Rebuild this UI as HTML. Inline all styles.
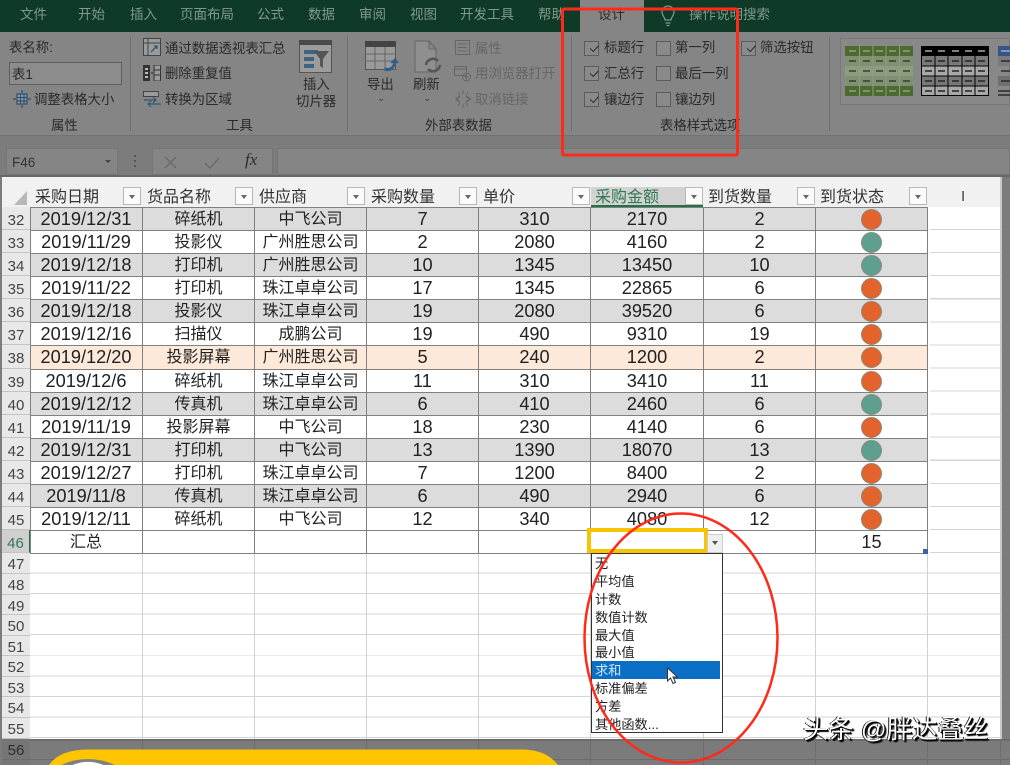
<!DOCTYPE html>
<html lang="zh"><head><meta charset="utf-8"><title>Excel</title>
<style>
html,body{margin:0;padding:0;background:#7b7b7b;overflow:hidden}
#p{position:relative;width:1010px;height:765px;overflow:hidden;background:#7c7c7c;font-family:"Liberation Sans","Noto Sans CJK SC",sans-serif;color:#262626;filter:blur(.35px)}
#p div,#p span{box-sizing:border-box}
.a{position:absolute;white-space:nowrap}
.t{position:absolute;top:6px;font-size:13.5px;line-height:18px;color:#7f9a8c;white-space:nowrap}
.m{position:absolute;font-size:13.4px;line-height:18px;white-space:nowrap;color:#2a2a2a;margin-top:1px}
.d{color:#666}
.sep{position:absolute;top:37px;width:1px;height:94px;background:#6e6e6e}
.cb{position:absolute;width:15px;height:15px;border:1px solid #5c5c5c;background:#8a8a8a}
.cb.on:after{content:"";position:absolute;left:3px;top:1px;width:7px;height:4px;border-left:1px solid #2a2a2a;border-bottom:1px solid #2a2a2a;transform:rotate(-48deg) translate(0,3px)}
.r{position:absolute;left:30px;width:898px;height:24px;display:flex;border-top:1px solid #808080;border-bottom:1px solid #808080;border-left:1px solid #808080;font-size:18.2px;line-height:22px;color:#222;background:#fff}
.r span{display:block;width:112px;flex:none;text-align:center;border-right:1px solid #808080;white-space:nowrap}
.r span:first-child{padding-right:1px}
.r span:nth-child(6){width:113px}
.r span:nth-child(2),.r span:nth-child(3){font-size:16px;padding-top:1px}
.g{background:#dcdcdc}.pc{background:#fde9d9}
.r i{display:block;width:19px;height:19px;border-radius:50%;margin:1px auto 0;border:1px solid #8a8a7a}
.o{background:#e4622c}.e{background:#5f9f90}
.n{position:absolute;left:2px;width:28px;background:#e8e8e8;font-size:15px;line-height:20px;text-align:center;color:#444;border-bottom:1px solid #c4c4c4}
.h{position:absolute;top:188px;font-size:16px;line-height:20px;color:#333;white-space:nowrap}
.f{position:absolute;top:187px;width:18px;height:18px;background:#fbfbfb;border:1px solid #b8b8b8}
.f:after{content:"";position:absolute;left:5px;top:7px;border-left:3px solid transparent;border-right:3px solid transparent;border-top:4px solid #666}
.dd{position:absolute;left:595px;font-size:13.2px;line-height:18px;color:#222;white-space:nowrap}
</style></head><body><div id="p">

<div class="a" style="left:0;top:0;width:1010px;height:32px;background:#0e3a27"></div>
<div class="a" style="left:0;top:32px;width:1010px;height:103px;background:#858585"></div>
<div class="a" style="left:0;top:135px;width:1010px;height:1px;background:#727272"></div>
<div class="a" style="left:580px;top:0;width:64px;height:33px;background:#858585"></div>

<span class="t" style="left:20px">文件</span><span class="t" style="left:78px">开始</span><span class="t" style="left:130px">插入</span><span class="t" style="left:180px">页面布局</span><span class="t" style="left:257px">公式</span><span class="t" style="left:308px">数据</span><span class="t" style="left:359px">审阅</span><span class="t" style="left:410px">视图</span><span class="t" style="left:460px">开发工具</span><span class="t" style="left:538px">帮助</span><span class="t" style="left:598px;color:#2e2e2e">设计</span><span class="t" style="left:689px">操作说明搜索</span>
<svg class="a" style="left:660px;top:5px" width="16" height="22" viewBox="0 0 16 22" fill="none" stroke="#7f9a8c" stroke-width="1.2"><path d="M5 15c0-3-3-4-3-8a6 6 0 0 1 12 0c0 4-3 5-3 8zM5.500 18h5M6.500 20.500h3"/></svg>

<div class="sep" style="left:130px"></div><div class="sep" style="left:347px"></div><div class="sep" style="left:571px"></div><div class="sep" style="left:829px"></div>

<span class="m" style="left:9px;top:38px">表名称:</span>
<div class="a" style="left:9px;top:62px;width:113px;height:23px;border:1px solid #5f5f5f;background:#8c8c8c"></div>
<span class="m" style="left:12px;top:65px">表1</span>
<svg class="a" style="left:12px;top:89px" width="20" height="20" viewBox="0 0 20 20" fill="none" stroke="#2f4f6a" stroke-width="1.2"><rect x="5" y="5" width="10" height="10" fill="#8fa0ad"/><path d="M5 8.500h10M5 12h10M8.500 5v10M12 5v10M10 1v3M10 16v3M1 10h3M16 10h3" /></svg>
<span class="m" style="left:34px;top:90px">调整表格大小</span>
<span class="m" style="left:51px;top:116px">属性</span>

<svg class="a" style="left:143px;top:38px" width="18" height="18" viewBox="0 0 18 18" fill="none" stroke="#444"><rect x=".5" y=".5" width="17" height="17" fill="#9a9a9a"/><path d="M.5 5h17M5 .5v17"/><path d="M8 14l6-6M11 8h3v3" stroke="#2f5877" stroke-width="1.300"/></svg>
<span class="m" style="left:165px;top:39px">通过数据透视表汇总</span>
<svg class="a" style="left:143px;top:65px" width="18" height="16" viewBox="0 0 18 16"><rect x="0" y="0" width="7" height="16" fill="#333"/><rect x="11" y="0" width="6.500" height="16" fill="#9a9a9a" stroke="#333"/><path d="M2 4h3M2 8h3M2 12h3" stroke="#bbb" stroke-width="2"/><path d="M8 8h2" stroke="#2f5877" stroke-width="2"/><path d="M11 5h6M11 10h6" stroke="#333"/></svg>
<span class="m" style="left:165px;top:64px">删除重复值</span>
<svg class="a" style="left:143px;top:91px" width="19" height="18" viewBox="0 0 19 18" fill="none" stroke="#444"><rect x=".5" y=".5" width="15" height="5" fill="#9a9a9a"/><path d="M1 9h12M10 6l3 3-3 3M18 13H5M8 10l-3 3 3 3" stroke="#2f5877" stroke-width="1.200"/></svg>
<span class="m" style="left:165px;top:90px">转换为区域</span>
<span class="m" style="left:226px;top:116px">工具</span>

<svg class="a" style="left:299px;top:40px" width="34" height="33" viewBox="0 0 34 33"><rect x=".5" y=".5" width="32" height="32" fill="#9c9c9c" stroke="#555"/><rect x="0" y="0" width="33" height="5" fill="#4a4a4a"/><path d="M5 10h14v4H5zM5 17h10v4H5zM5 24h10v4H5z" fill="#3e6480"/><path d="M15 11h15l-6 8v9l-3-2v-7z" fill="#555"/></svg>
<span class="m" style="left:303px;top:75px">插入</span><span class="m" style="left:296px;top:92px">切片器</span>

<svg class="a" style="left:365px;top:41px" width="34" height="34" viewBox="0 0 34 34"><rect x=".5" y=".5" width="30" height="28" fill="#9a9a9a" stroke="#555"/><rect x="0" y="0" width="31" height="6" fill="#444"/><path d="M0 13h30M0 20h30M10 6v22M20 6v22" stroke="#666"/><path d="M20 26c3 2 7 1 8-4l-3 0 5-5 4 5-3 0c-1 7-8 10-12 7z" fill="#2f5f8a"/></svg>
<span class="m" style="left:367px;top:75px">导出</span>
<span class="a" style="left:377px;top:93px;font-size:10px;color:#444">⌄</span>
<svg class="a" style="left:414px;top:40px" width="30" height="36" viewBox="0 0 30 36" fill="none" stroke="#666"><path d="M1 1h14l7 8v23H1zM15 1v8h7" fill="#8f8f8f"/><path d="M12 25a7 7 0 0 1 12-4M26 25a7 7 0 0 1-12 4" stroke="#555" stroke-width="2.500"/></svg>
<span class="m" style="left:413px;top:75px">刷新</span>
<span class="a" style="left:423px;top:93px;font-size:10px;color:#444">⌄</span>

<svg class="a" style="left:455px;top:40px" width="15" height="15" viewBox="0 0 15 15" fill="none" stroke="#666"><rect x=".5" y=".5" width="14" height="14"/><path d="M3 4h9M3 7.500h9M3 11h9"/></svg>
<span class="m d" style="left:475px;top:39px">属性</span>
<svg class="a" style="left:454px;top:65px" width="18" height="17" viewBox="0 0 18 17" fill="none" stroke="#666"><path d="M.5 1.500h12v9H.5zM.5 4h12" /><circle cx="12.500" cy="12" r="4"/><path d="M10 12h5M12.500 9.500v5"/></svg>
<span class="m d" style="left:475px;top:64px">用浏览器打开</span>
<svg class="a" style="left:454px;top:90px" width="18" height="18" viewBox="0 0 18 18" fill="none" stroke="#666"><path d="M9 0v4M9 14v4M4 2l2 3M14 2l-2 3M4 16l2-3M14 16l-2-3"/><path d="M6 6L2 9l4 3M12 6l4 3-4 3" stroke-width="1.500"/></svg>
<span class="m d" style="left:475px;top:90px">取消链接</span>
<span class="m" style="left:425px;top:116px">外部表数据</span>

<div class="cb on" style="left:584px;top:41px"></div><span class="m" style="left:604px;top:38px">标题行</span>
<div class="cb on" style="left:584px;top:66px"></div><span class="m" style="left:604px;top:64px">汇总行</span>
<div class="cb on" style="left:584px;top:92px"></div><span class="m" style="left:604px;top:90px">镶边行</span>
<div class="cb" style="left:656px;top:41px"></div><span class="m" style="left:675px;top:38px">第一列</span>
<div class="cb" style="left:656px;top:66px"></div><span class="m" style="left:675px;top:64px">最后一列</span>
<div class="cb" style="left:656px;top:92px"></div><span class="m" style="left:675px;top:90px">镶边列</span>
<div class="cb on" style="left:741px;top:41px"></div><span class="m" style="left:760px;top:38px">筛选按钮</span>
<span class="m" style="left:660px;top:116px">表格样式选项</span>

<div class="a" style="left:840px;top:38px;width:170px;height:67px;border:1px solid #787878;background:#888"></div>
<svg class="a" style="left:845px;top:46px" width="165" height="50" viewBox="0 0 165 50">
<rect x="0" y="0" width="68" height="50" fill="#8c9c7e"/>
<rect x="0" y="0" width="68" height="10" fill="#4f6a30"/><rect x="0" y="40" width="68" height="10" fill="#4f6a30"/>
<rect x="0" y="10" width="68" height="10" fill="#7f9172"/><rect x="0" y="30" width="68" height="10" fill="#7f9172"/>
<path d="M14.500 0v50M28 0v50M41 0v50M54.500 0v50" stroke="#8c9c7e" stroke-width="1"/>
<path d="M4 5h7M18 5h7M31 5h7M44 5h7M58 5h7M4 45h7M18 45h7M31 45h7M44 45h7M58 45h7" stroke="#8fa37e" stroke-width="1.500"/>
<path d="M4 15h7M18 15h7M31 15h7M44 15h7M58 15h7M4 25h7M18 25h7M31 25h7M44 25h7M58 25h7M4 35h7M18 35h7M31 35h7M44 35h7M58 35h7" stroke="#33402b" stroke-width="1.500"/>
<rect x="76.500" y=".5" width="67" height="49" fill="#a8a8a8" stroke="#000"/>
<rect x="76" y="0" width="68" height="10" fill="#000"/>
<rect x="77" y="10" width="66" height="10" fill="#787878"/><rect x="77" y="30" width="66" height="10" fill="#787878"/>
<path d="M90 10v40M103 10v40M117 10v40M130 10v40M76 20h68M76 30h68M76 40h68" stroke="#000" stroke-width="1"/>
<path d="M80 5h7M93 5h7M107 5h7M120 5h7M133 5h7" stroke="#aaa" stroke-width="1.500"/>
<path d="M80 15h7M93 15h7M107 15h7M120 15h7M133 15h7M80 25h7M93 25h7M107 25h7M120 25h7M133 25h7M80 35h7M93 35h7M107 35h7M120 35h7M133 35h7M80 45h7M93 45h7M107 45h7M120 45h7M133 45h7" stroke="#222" stroke-width="1.500"/>
<rect x="153" y="0" width="12" height="10" fill="#35558a"/><path d="M156 5h9" stroke="#aab" stroke-width="1.500"/>
<rect x="153" y="10" width="12" height="10" fill="#7a7a7a"/><rect x="153" y="30" width="12" height="10" fill="#707070"/>
<path d="M156 15h9M156 25h9M156 35h9M153 45h12M153 49h12" stroke="#2a2a2a" stroke-width="1.500"/>
</svg>

<div class="a" style="left:6px;top:148px;width:112px;height:27px;background:#858585;border:1px solid #757575"></div>
<span class="a" style="left:12px;top:154px;font-size:13.5px;line-height:17px;color:#333">F46</span>
<div class="a" style="left:105px;top:160px;border-left:3px solid transparent;border-right:3px solid transparent;border-top:3px solid #444"></div>
<div class="a" style="left:134px;top:155px;width:2px;height:12px;background:repeating-linear-gradient(#555 0 2px,transparent 2px 5px)"></div>
<div class="a" style="left:152px;top:148px;width:121px;height:27px;background:#858585;border:1px solid #757575"></div>
<svg class="a" style="left:164px;top:155px" width="100" height="15" viewBox="0 0 100 15" fill="none" stroke="#6a6a6a" stroke-width="1.500"><path d="M1 2l11 11M12 2L1 13M41 8l5 5 9-10"/></svg>
<span class="a" style="left:245px;top:150px;font:italic 17px 'Liberation Serif',serif;color:#2e2e2e">fx</span>
<div class="a" style="left:277px;top:148px;width:733px;height:27px;background:#858585;border:1px solid #757575"></div>

<div class="a" style="left:0;top:175px;width:1010px;height:2px;background:#686868"></div>
<div class="a" style="left:2px;top:177px;width:999px;height:562px;background:#fff"></div>
<div class="a" style="left:2px;top:177px;width:999px;height:30px;background:#f1f1f1"></div>
<div class="a" style="left:1000px;top:177px;width:2px;height:562px;background:#c8c8c8"></div>

<div class="a" style="left:930px;top:207px;width:71px;height:347px;background:repeating-linear-gradient(to bottom,transparent 0 22px,#d4d4d4 22px 23.07px)"></div>
<div class="a" style="left:30px;top:553px;width:971px;height:186px;background:repeating-linear-gradient(to bottom,transparent 0 19.6px,#d4d4d4 19.6px 20.55px)"></div>
<svg class="a" style="left:30px;top:553px" width="900" height="186"><path d="M112.500 0v186M224.500 0v186M336.500 0v186M448.500 0v186M560.500 0v186M673.500 0v186M785.500 0v186M897.500 0v186" stroke="#d2d2d2"/></svg>

<svg class="a" style="left:14px;top:191px" width="13" height="14"><path d="M13 0v14H0z" fill="#b8b8b8"/></svg>
<span class="h" style="left:35px">采购日期</span><div class="f" style="left:123px"></div>
<span class="h" style="left:147px">货品名称</span><div class="f" style="left:235px"></div>
<span class="h" style="left:259px">供应商</span><div class="f" style="left:347px"></div>
<span class="h" style="left:371px">采购数量</span><div class="f" style="left:459px"></div>
<span class="h" style="left:483px">单价</span><div class="f" style="left:572px"></div>
<div class="a" style="left:591px;top:187px;width:112px;height:19px;background:#d2d2d2"></div>
<div class="a" style="left:591px;top:205px;width:112px;height:2px;background:#217346"></div>
<span class="h" style="left:595px;color:#2f7a52">采购金额</span><div class="f" style="left:685px"></div>
<span class="h" style="left:708px">到货数量</span><div class="f" style="left:797px"></div>
<span class="h" style="left:820px">到货状态</span><div class="f" style="left:909px"></div>
<span class="a" style="left:961px;top:188px;font-size:15px;line-height:18px;color:#444">I</span>

<div class="r g" style="top:207px"><span>2019/12/31</span><span>碎纸机</span><span>中飞公司</span><span>7</span><span>310</span><span>2170</span><span>2</span><span><i class="o"></i></span></div>
<div class="r" style="top:230px"><span>2019/11/29</span><span>投影仪</span><span>广州胜思公司</span><span>2</span><span>2080</span><span>4160</span><span>2</span><span><i class="e"></i></span></div>
<div class="r g" style="top:253px"><span>2019/12/18</span><span>打印机</span><span>广州胜思公司</span><span>10</span><span>1345</span><span>13450</span><span>10</span><span><i class="e"></i></span></div>
<div class="r" style="top:276px"><span>2019/11/22</span><span>打印机</span><span>珠江卓卓公司</span><span>17</span><span>1345</span><span>22865</span><span>6</span><span><i class="o"></i></span></div>
<div class="r g" style="top:299px"><span>2019/12/18</span><span>投影仪</span><span>珠江卓卓公司</span><span>19</span><span>2080</span><span>39520</span><span>6</span><span><i class="o"></i></span></div>
<div class="r" style="top:322px"><span>2019/12/16</span><span>扫描仪</span><span>成鹏公司</span><span>19</span><span>490</span><span>9310</span><span>19</span><span><i class="o"></i></span></div>
<div class="r pc" style="top:345px;height:25px"><span>2019/12/20</span><span>投影屏幕</span><span>广州胜思公司</span><span>5</span><span>240</span><span>1200</span><span>2</span><span><i class="o"></i></span></div>
<div class="r" style="top:369px"><span>2019/12/6</span><span>碎纸机</span><span>珠江卓卓公司</span><span>11</span><span>310</span><span>3410</span><span>11</span><span><i class="o"></i></span></div>
<div class="r g" style="top:392px"><span>2019/12/12</span><span>传真机</span><span>珠江卓卓公司</span><span>6</span><span>410</span><span>2460</span><span>6</span><span><i class="e"></i></span></div>
<div class="r" style="top:415px"><span>2019/11/19</span><span>投影屏幕</span><span>中飞公司</span><span>18</span><span>230</span><span>4140</span><span>6</span><span><i class="o"></i></span></div>
<div class="r g" style="top:438px"><span>2019/12/31</span><span>打印机</span><span>中飞公司</span><span>13</span><span>1390</span><span>18070</span><span>13</span><span><i class="e"></i></span></div>
<div class="r" style="top:461px"><span>2019/12/27</span><span>打印机</span><span>珠江卓卓公司</span><span>7</span><span>1200</span><span>8400</span><span>2</span><span><i class="o"></i></span></div>
<div class="r g" style="top:484px"><span>2019/11/8</span><span>传真机</span><span>珠江卓卓公司</span><span>6</span><span>490</span><span>2940</span><span>6</span><span><i class="o"></i></span></div>
<div class="r" style="top:507px"><span>2019/12/11</span><span>碎纸机</span><span>中飞公司</span><span>12</span><span>340</span><span>4080</span><span>12</span><span><i class="o"></i></span></div>
<div class="r" style="top:530px"><span style="font-size:16px;padding-top:1px">汇总</span><span></span><span></span><span></span><span></span><span></span><span></span><span>15</span></div>

<div class="n" style="top:207px;height:23px;line-height:27px">32</div>
<div class="n" style="top:230px;height:23px;line-height:27px">33</div>
<div class="n" style="top:253px;height:23px;line-height:27px">34</div>
<div class="n" style="top:276px;height:23px;line-height:27px">35</div>
<div class="n" style="top:299px;height:23px;line-height:27px">36</div>
<div class="n" style="top:322px;height:23px;line-height:27px">37</div>
<div class="n" style="top:345px;height:24px;line-height:27px">38</div>
<div class="n" style="top:369px;height:23px;line-height:27px">39</div>
<div class="n" style="top:392px;height:23px;line-height:27px">40</div>
<div class="n" style="top:415px;height:23px;line-height:27px">41</div>
<div class="n" style="top:438px;height:23px;line-height:27px">42</div>
<div class="n" style="top:461px;height:23px;line-height:27px">43</div>
<div class="n" style="top:484px;height:23px;line-height:27px">44</div>
<div class="n" style="top:507px;height:23px;line-height:27px">45</div>
<div class="n" style="top:530px;height:23px;line-height:27px;background:#cfcfcf;color:#2f7a52;border-right:1px solid #217346">46</div>
<div class="n" style="top:553px;height:21px;line-height:23px">47</div>
<div class="n" style="top:574px;height:21px;line-height:23px">48</div>
<div class="n" style="top:595px;height:20px;line-height:23px">49</div>
<div class="n" style="top:615px;height:21px;line-height:23px">50</div>
<div class="n" style="top:636px;height:20px;line-height:23px">51</div>
<div class="n" style="top:656px;height:21px;line-height:23px">52</div>
<div class="n" style="top:677px;height:20px;line-height:23px">53</div>
<div class="n" style="top:697px;height:21px;line-height:23px">54</div>
<div class="n" style="top:718px;height:21px;line-height:23px">55</div>

<div class="a" style="left:2px;top:739px;width:1008px;height:26px;background:#7b7b7b"></div>
<div class="a" style="left:2px;top:739px;width:1008px;height:2px;background:#6c6c6c"></div>
<div class="a" style="left:2px;top:739px;width:28px;height:26px;background:#767676"></div>
<div class="a" style="left:2px;top:759px;width:1008px;height:1px;background:#6c6c6c"></div>
<span class="a" style="left:2px;top:741px;width:28px;text-align:center;font-size:15px;line-height:20px;color:#2c2c2c">56</span>
<svg class="a" style="left:30px;top:739px" width="980" height="26"><path d="M112.500 0v26M224.500 0v26M336.500 0v26M448.500 0v26M560.500 0v26M673.500 0v26M785.500 0v26M897.500 0v26M970.500 0v26" stroke="#6e6e6e"/></svg>

<svg class="a" style="left:0;top:745px" width="570" height="20" viewBox="0 745 570 20">
<path d="M49 765Q60 749.500 88 749.500H522Q546 749.500 558 765Z" fill="#ffc600"/>
<path d="M61 765A64 64 0 0 1 115 765Z" fill="#808080"/>
<path d="M72.500 765A41.500 41.500 0 0 1 103.500 765Z" fill="#fff"/>
</svg>

<div class="a" style="left:587px;top:528px;width:121px;height:25px;border:4px solid #f8c400;background:#fff"></div>
<div class="a" style="left:707px;top:534px;width:16px;height:19px;background:#efefef;border:1px solid #ccc"></div>
<div class="a" style="left:712px;top:541px;border-left:3px solid transparent;border-right:3px solid transparent;border-top:4px solid #555"></div>
<div class="a" style="left:923px;top:549px;width:5px;height:5px;background:#3f5f9f"></div>

<div class="a" style="left:591px;top:553px;width:132px;height:180px;background:#fff;border:1px solid #333"></div>
<div class="a" style="left:592px;top:661px;width:128px;height:18px;background:#0a6fc4"></div>
<span class="dd" style="top:555px">无</span>
<span class="dd" style="top:573px">平均值</span>
<span class="dd" style="top:591px">计数</span>
<span class="dd" style="top:609px">数值计数</span>
<span class="dd" style="top:627px">最大值</span>
<span class="dd" style="top:644px">最小值</span>
<span class="dd" style="top:662px;color:#cfe6fa">求和</span>
<span class="dd" style="top:680px">标准偏差</span>
<span class="dd" style="top:698px">方差</span>
<span class="dd" style="top:716px">其他函数...</span>
<svg class="a" style="left:666px;top:667px" width="13" height="18" viewBox="0 0 13 18"><path d="M1.500 1v13l3-3 2.500 5.500 2.500-1L7 10h4.500z" fill="#fff" stroke="#333"/></svg>

<svg class="a" style="left:0;top:0" width="1010" height="765" fill="none">
<rect x="562.500" y="9" width="175" height="146" rx="1.500" stroke="#ff2a1a" stroke-width="3"/>
<ellipse cx="681" cy="638" rx="96.500" ry="124.500" stroke="#ff2a1a" stroke-width="2.500"/>
</svg>

<span class="a" style="left:803px;top:716px;font-size:25.4px;line-height:28px;color:#fff;text-shadow:1px 1px 0 #000,2px 2px 1px #000,-1px 0 0 #222">头条 @胖达叠丝</span>
</div></body></html>
